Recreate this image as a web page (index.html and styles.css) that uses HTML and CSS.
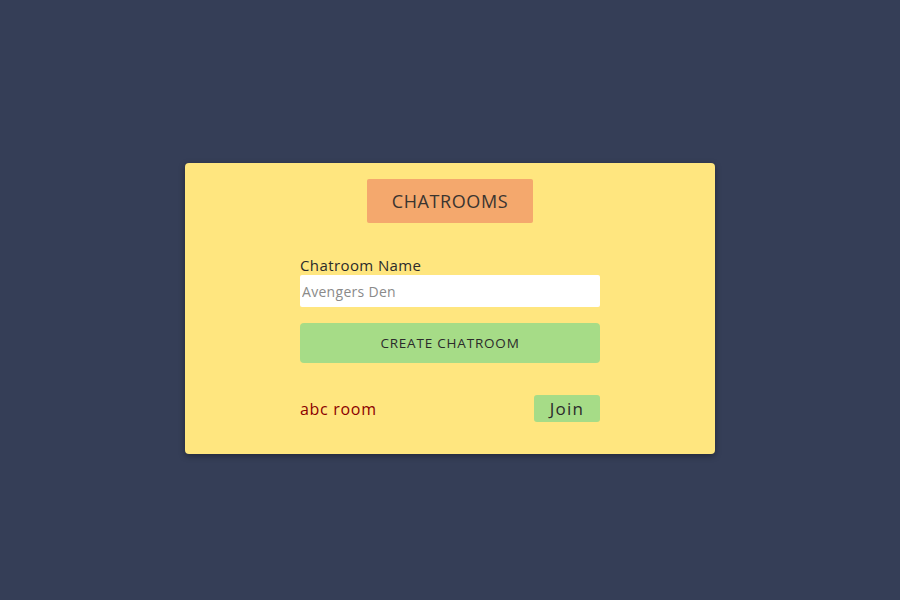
FILE: index.html
```html
<!DOCTYPE html>
<html>
<head>
<meta charset="utf-8">
<link rel="stylesheet" href="styles.css">
</head>
<body>
<div class="card">
  <div class="title">CHATROOMS</div>
  <div class="form">
    <label class="label" for="name">Chatroom Name</label>
    <input class="input" id="name" type="text" placeholder="Avengers Den">
    <button class="create">CREATE CHATROOM</button>
    <div class="room">
      <span class="room-name">abc room</span>
      <button class="join">Join</button>
    </div>
  </div>
</div>
</body>
</html>
```
FILE: styles.css
```css
html, body {
  margin: 0;
  padding: 0;
}
body {
  background: #353e57;
  height: 600px;
  display: flex;
  justify-content: center;
  align-items: flex-start;
  font-family: "Open Sans", "DejaVu Sans", sans-serif;
}
.card {
  margin-top: 163px;
  width: 530px;
  height: 291px;
  box-sizing: border-box;
  background: #ffe67f;
  border-radius: 4px;
  box-shadow: 0 2px 6px rgba(0, 0, 0, 0.35);
  display: flex;
  flex-direction: column;
  align-items: center;
  padding-top: 16px;
}
.title {
  width: 166px;
  height: 44px;
  background: #f4a86d;
  border-radius: 2px;
  color: #3a3530;
  font-size: 18px;
  line-height: 44px;
  text-align: center;
  letter-spacing: 0.6px;
}
.form {
  width: 300px;
  margin-top: 33px;
  display: flex;
  flex-direction: column;
}
.label {
  font-size: 15px;
  line-height: 19px;
  color: #2b2b2b;
  letter-spacing: 0.4px;
}
.input {
  height: 32px;
  box-sizing: border-box;
  border: none;
  border-radius: 2px;
  background: #fff;
  padding: 0 2px;
  font-family: inherit;
  font-size: 14px;
  color: #333;
  outline: none;
  letter-spacing: 0.3px;
}
.input::placeholder {
  color: #8a8a8a;
}
.create {
  margin-top: 16px;
  height: 40px;
  border: none;
  border-radius: 4px;
  background: #a6dc87;
  color: #2b2b2b;
  font-family: inherit;
  font-size: 13.5px;
  letter-spacing: 0.8px;
  padding: 0;
}
.room {
  margin-top: 32px;
  display: flex;
  justify-content: space-between;
  align-items: center;
}
.room-name {
  color: #8b0000;
  font-size: 16px;
  letter-spacing: 0.7px;
}
.join {
  width: 66px;
  height: 27px;
  border: none;
  border-radius: 3px;
  background: #a6dc87;
  color: #2b2b2b;
  font-family: inherit;
  font-size: 17px;
  letter-spacing: 1.2px;
  padding: 0;
}
```
